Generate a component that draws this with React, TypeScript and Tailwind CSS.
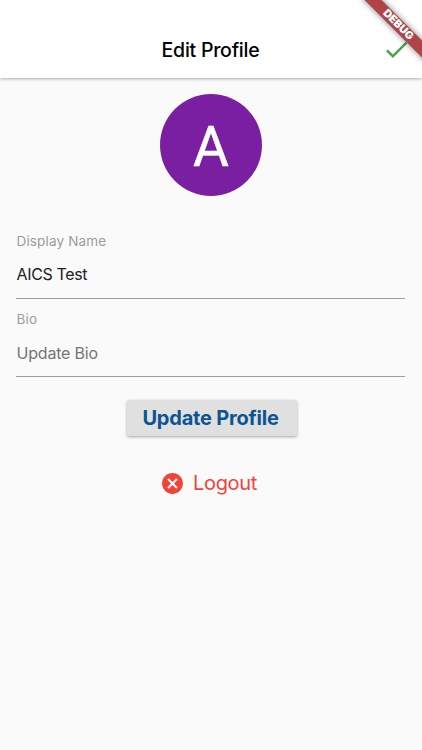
import React from "react";
import { MdCancel, MdDone } from "react-icons/md";

function Field({ label, value, muted }: { label: string; value: string; muted?: boolean }) {
  return (
    <label className="block h-[78.5px] border-b border-[#a0a0a0]">
      <span className={`block pl-[0.5px] text-[13.5px] leading-[18px] tracking-[0.15px] text-[#9c9c9c] ${muted ? "pt-[11px]" : "pt-[12px]"}`}>{label}</span>
      <span className={`block pl-[0.5px] text-[16px] leading-[20px] ${muted ? "pt-[15px] tracking-[-0.2px] text-[#757575]" : "pt-[14px] tracking-[-0.35px] text-[#212121]"}`}>
        {value}
      </span>
    </label>
  );
}

export default function App() {
  return (
    <div className="relative flex h-[750px] w-[422px] flex-col overflow-hidden bg-[#fafafa] font-['Inter',sans-serif]">
      <header className="relative flex h-[78px] shrink-0 justify-center bg-white pt-[37px] shadow-[0_1px_3px_rgba(0,0,0,0.3)]">
        <h1 className="pr-px text-[19.5px] leading-[26px] font-medium tracking-[-0.25px] text-black">Edit Profile</h1>
        <MdDone className="absolute top-[35px] right-[11px] size-[29px] text-[#43a548]" />
      </header>
      <main className="flex flex-col items-center pt-[16px]">
        <div className="flex size-[102px] items-center justify-center rounded-full bg-[#7b1fa2] font-['Roboto',sans-serif] text-[55px] leading-none text-white [-webkit-text-stroke:0.5px_white]">
          <span className="pt-[4px]">A</span>
        </div>
        <form className="mt-[24px] w-full pr-[17px] pl-[16px]">
          <Field label="Display Name" value="AICS Test" />
          <Field label="Bio" value="Update Bio" muted />
        </form>
        <button className="mt-[22.5px] ml-px h-[36.5px] w-[170px] rounded-[2px] bg-[#e0e0e0] pr-[2px] text-[20px] font-bold tracking-[-0.2px] whitespace-nowrap text-[#0d5591] shadow-[0_1px_3px_rgba(0,0,0,0.35)]">
          Update Profile
        </button>
        <button className="mt-[33.5px] flex h-[27px] items-center gap-[8px] pr-[5px] text-[20px] tracking-[-0.35px] text-[#f04438]">
          <MdCancel className="size-[25px]" />
          <span>Logout</span>
        </button>
      </main>
      <div className="absolute top-[18.5px] right-[-20.5px] flex h-[12px] w-[90px] rotate-45 items-center justify-center bg-[#b04347] text-[10.8px] leading-none font-black text-white shadow-[0_0_6px_rgba(0,0,0,0.5)]">
        DEBUG
      </div>
    </div>
  );
}
